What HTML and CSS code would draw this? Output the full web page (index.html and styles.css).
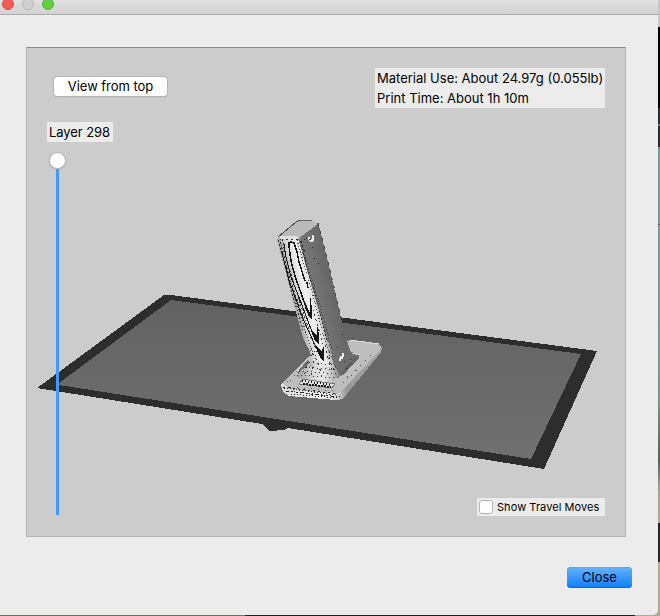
FILE: index.html
```html
<!DOCTYPE html>
<html lang="en">
<head>
<meta charset="utf-8">
<title>Print Preview</title>
<link rel="stylesheet" href="styles.css">
</head>
<body>
<div class="window">
  <header class="titlebar">
    <span class="light red"></span><span class="light gray"></span><span class="light green"></span>
  </header>
  <main class="content">
    <section class="viewport">
      <svg class="scene" width="598" height="488" viewBox="27 48 598 488" shape-rendering="crispEdges">
        <defs>
          <linearGradient id="bed" x1="0" y1="0" x2="0" y2="1"><stop offset="0" stop-color="#626262"/><stop offset="1" stop-color="#707070"/></linearGradient>
          <linearGradient id="front" gradientUnits="userSpaceOnUse" x1="294" y1="300" x2="319" y2="294"><stop offset="0" stop-color="#a8a8a8"/><stop offset=".2" stop-color="#d4d4d4"/><stop offset=".5" stop-color="#f0f0f0"/><stop offset=".75" stop-color="#e2e2e2"/><stop offset="1" stop-color="#858585"/></linearGradient>
          <linearGradient id="side" gradientUnits="userSpaceOnUse" x1="310" y1="300" x2="336" y2="294"><stop offset="0" stop-color="#7a7a7a"/><stop offset="1" stop-color="#666"/></linearGradient>
          <linearGradient id="foot" x1="0" y1="0" x2="1" y2="0"><stop offset="0" stop-color="#a0a0a0"/><stop offset=".25" stop-color="#d4d4d4"/><stop offset=".4" stop-color="#e8e8e8"/><stop offset=".55" stop-color="#c4c4c4"/><stop offset=".68" stop-color="#808080"/><stop offset="1" stop-color="#6d6d6d"/></linearGradient>
          <linearGradient id="rim" x1="0" y1="0" x2="1" y2="0"><stop offset="0" stop-color="#dcdcdc"/><stop offset=".4" stop-color="#efefef"/><stop offset=".55" stop-color="#d8d8d8"/><stop offset=".65" stop-color="#989898"/><stop offset="1" stop-color="#a8a8a8"/></linearGradient>
        </defs>
        <path fill="#2d2d2d" d="M164 295 171 295 597 351 544 469 288 428 284 430 270 431 262 424 37 388z"/>
        <path fill="url(#bed)" d="M171 300 581 354 531 459 59 385 59 383z"/>
        <!-- base plate -->
        <path fill="url(#rim)" d="M281 385 284 381 352 340 379 344 382 348 381 352 347 394 343 399 336 400 289 396 283 392z"/>
        <path fill="#bebebe" d="M282 383 308 357 345 343 350 340 376 343 381 346 380 350 342 391 337 394 288 389z"/>
        <path fill="#6f6f6f" d="M296 372 308 359 310 366 303 375z"/>
        <path fill="none" stroke="#dedede" d="M296 373 308 358M350 340 379 344"/>
        <!-- column foot -->
        <path fill="url(#foot)" d="M308 346 312 358 307 366 298 373 297 377 302 379 332 383 336 377 343 376 360 358 360 355 351 352 346 338z"/>
        <path fill="#6d6d6d" d="M329 338 345 338 349 350 354 353 359 355 359 359 343 376 339 374 333 363z"/>
        <path fill="none" stroke="#c8c8c8" d="M352 353 359 355 359 359 344 375 340 377"/>
        <path fill="none" stroke="#555" d="M357 357 341 374"/>
        <!-- column faces -->
        <path fill="url(#front)" d="M277 239 280 236 297 237 301 242 312 286 331 353 332 367 309 367 312 355 303 338 290 290z"/>
        <path fill="url(#side)" d="M298 238 303 232 318 223 320 230 330 270 342 322 348 348 336 368 329 345 311 284z"/>
        <path fill="#bababa" d="M278 236 295 223 300 220 313 221 318 224 299 238 281 237z"/>
        <path fill="#e0e0e0" d="M280 236h17l2 3h-19z"/>
        <path fill="none" stroke="#4a4a4a" d="M278 237 296 222 300 220"/>
        <path fill="none" stroke="#686868" d="M300 220.500 312 220.500"/>
        <path fill="none" stroke="#484848" stroke-dasharray="3 5" d="M318 223 320 230 330 270 342 322"/>
        <path fill="none" stroke="#303030" stroke-dasharray="2 2" d="M278 240 291 290 304 333M282 239 288 265 303 312 314 345M301 241 307 268 317 300 327 340"/>
        <path fill="none" stroke="#404040" stroke-dasharray="1 2" d="M280 239 292 289 308 339 314 356M297 240 305 268 314 299 324 338 330 356M302 246 309 270 320 306 332 350"/>
        <path fill="none" stroke="#303030" stroke-dasharray="2 3" d="M286 239 300 240 306 255M280 242 289 276 305 323 317 352M310 300 323 344"/>
        <!-- contour bands -->
        <path fill="none" stroke="#191919" d="M284 244 286 257 291 277 302 305 315 340M282 253 289 280 303 319 321 358"/>
        <path fill="none" stroke="#151515" stroke-width="1.500" d="M289 247 289 243 291 242 294 243 297 252 299 262 305 281M289 246 291 261 295 276 303 299 311 318M307 282 308 288"/>
        <path fill="#151515" d="M310 298h1l1 15v7l-3-3-5-12 6 8zM317 327h1l1 10v7l-3-2-6-14 7 8zM323 347h1v14l-3-2-7-16 8 9z"/>
        <!-- layer speckles around the foot -->
        <path fill="none" stroke="#333" stroke-dasharray="1 3" d="M310 350 322 353M311 355 332 357M309 362 333 365M305 367 336 370M299 371 339 374M297 375 338 378"/>
        <path fill="none" stroke="#333" stroke-dasharray="2 4" d="M312 353 318 362 322 377M325 345 328 358 333 373M329 351 330 362 336 372M307 366 304 377M314 361 311 378"/>
        <path fill="none" stroke="#555" stroke-dasharray="1 6" d="M287 382 299 377M295 375 288 383M351 376 375 350M290 387 333 391M343 383 348 376"/>
        <!-- front rim hatching -->
        <path fill="none" stroke="#252525" stroke-dasharray="1 2" d="M284 388 336 395M288 391 340 397M291 394 337 398"/>
        <path fill="none" stroke="#252525" stroke-dasharray="2 3" d="M283 387 338 394M286 391 336 397"/>
        <!-- base slot -->
        <path fill="#e6e6e6" stroke="#777" d="M303 379 335 384 332 388 299 384z"/>
        <path fill="none" stroke="#151515" stroke-width="2" stroke-dasharray="1 2" d="M302 381 332 385"/>
        <path fill="none" stroke="#151515" stroke-width="2" stroke-dasharray="2 1" d="M303 384 331 387"/>
        <!-- screw holes -->
        <path fill="#eee" d="M308 237h2v2h2v-4h2v5l-2 2h-2l-2-2zM340 356h2v-3h2v4h-1v2h-2v2h-2v-3h1z"/>
        <path fill="#292929" d="M309 239h2v1h-2zM313 234h1v1h-1zM304 239h1v1h-1zM306 238h1v1h-1zM312 247h1v1h-1zM314 258h1v1h-1zM318 263h1v1h-1zM344 361h1v1h-1zM335 366h1v1h-1zM350 359h1v1h-1zM342 334h1v1h-1zM337 347h1v1h-1zM352 364h1v1h-1zM347 368h1v1h-1z"/>
      </svg>
      <div class="overlay">
        <div class="left-tools">
          <button class="view-button">View from top</button>
          <span class="layer-label"><span>Layer 298</span></span>
          <div class="slider"><span class="knob"></span><span class="track"></span></div>
        </div>
        <div class="right-tools">
          <div class="stats"><span>Material Use: About 24.97g (0.055lb)</span><span>Print Time: About 1h 10m</span></div>
          <label class="travel"><span class="box"></span><span>Show Travel Moves</span></label>
        </div>
      </div>
    </section>
    <footer class="actions"><button class="close-button">Close</button></footer>
  </main>
</div>
</body>
</html>
```
FILE: styles.css
```css
* { box-sizing: border-box; }
body {
  margin: 0;
  width: 660px;
  height: 616px;
  overflow: hidden;
  font: 13px/20px Inter, "Liberation Sans", sans-serif;
  color: #000;
  background:
    linear-gradient(to bottom, #c7c7c7 0 27px, #000 27px 108px, #292a2c 108px 124px, #77787a 124px 126px, #292a2c 126px 147px, #7f9896 147px 224px, #4c5a59 224px 225px, #7f9896 225px, #82908a 400px, #5b625d 460px, #a1a294 490px, #a7a899 523px, #242424 523px 562px, #a9aa98 562px) right top / 2px 100% no-repeat,
    linear-gradient(to right, #70716a 0 245px, #222 245px 635px, #a9aa98 635px);
}
button { font: inherit; color: inherit; padding: 0; border: 0; }
.window {
  width: 658px;
  height: 615px;
  overflow: hidden;
  background: #ececec;
  border-radius: 0 0 5px 0;
}
.titlebar {
  display: flex;
  gap: 8px;
  height: 15px;
  padding-left: 2px;
  background: linear-gradient(#e0e0e1, #d1d1d2);
  border-bottom: 1px solid #b0afb2;
}
.light { width: 12px; height: 12px; margin-top: -2px; border-radius: 50%; border: 1px solid; }
.red { background: #f15c54; border-color: #d94e46; }
.gray { background: #d0d0d0; border-color: #b9b9b9; }
.green { background: #65cd43; border-color: #50af31; }
.content { padding: 32px 26px 0; }
.viewport {
  display: grid;
  width: 600px;
  height: 490px;
  background: #ccc;
  border: 1px solid #b2b2b2;
  border-top-color: #8d8d8d;
}
.scene, .overlay { grid-area: 1 / 1; }
.scene { display: block; }
.overlay { display: flex; justify-content: space-between; padding: 20px; }
.left-tools { display: flex; flex-direction: column; align-items: flex-start; }
.view-button {
  width: 113px;
  height: 19px;
  margin: 9px 0 0 7px;
  line-height: 19px;
  letter-spacing: -0.05px;
  border-radius: 3.5px;
  background: #fff;
  box-shadow: 0 0 0 1px #b4b4b4, 0 1px 1px #999;
}
.layer-label { height: 20px; width: 66px; margin-top: 26px; padding-left: 2px; background: #ececec; letter-spacing: -0.08px; white-space: nowrap; }
.slider { display: flex; flex-direction: column; align-items: center; width: 17px; margin: 10px 0 0 2px; }
.knob { width: 17px; height: 17px; border-radius: 50%; background: #fff; border: 1px solid #b0b0b0; box-shadow: 0 1px 1px #bbb; }
.track { width: 3px; height: 346px; background: #3f9bff; }
.right-tools { display: flex; flex-direction: column; justify-content: space-between; align-items: flex-end; }
.stats { display: flex; flex-direction: column; width: 230px; height: 40px; padding-left: 2px; background: #ececec; white-space: nowrap; }
.travel { display: flex; align-items: center; gap: 4px; width: 128px; height: 18px; padding-left: 2px; background: #ececec; font-size: 11px; letter-spacing: 0.06px; line-height: 18px; white-space: nowrap; }
.box { width: 14px; height: 14px; border: 1px solid #b4b4b4; border-radius: 3px; background: #fff; }
.actions { display: flex; justify-content: flex-end; padding-top: 30px; }
.close-button {
  width: 65px;
  height: 21px;
  padding-bottom: 1px;
  line-height: 20px;
  border-radius: 4px;
  background: linear-gradient(#69b2fa, #0d7dff);
  box-shadow: inset 0 -1px #0867e8, inset 0 0 0 .5px #4a9bf0;
}
```
